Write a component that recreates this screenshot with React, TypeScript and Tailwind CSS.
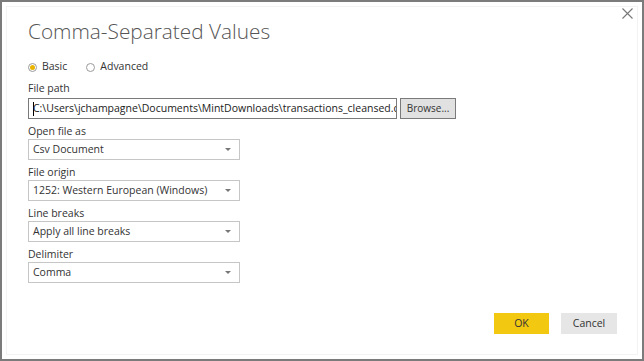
import React from "react";

const font = { fontFamily: '"Open Sans", "Noto Sans", sans-serif' };

function Radio({ label, checked }: { label: string; checked?: boolean }) {
  return (
    <label className="flex items-center gap-[5px] text-[10.5px] text-[#333]">
      <span className="w-[9px] h-[9px] rounded-full border border-[#9a9a9a] flex items-center justify-center bg-white">
        {checked && <span className="w-[5px] h-[5px] rounded-full bg-[#e8b400]" />}
      </span>
      {label}
    </label>
  );
}

function Select({ value }: { value: string }) {
  return (
    <div className="w-[212px] h-[21px] border border-[#c6c6c6] bg-white flex items-center justify-between pl-[4px] pr-[8px] text-[10.5px] text-[#333] whitespace-nowrap">
      <span>{value}</span>
      <svg width="6" height="3" viewBox="0 0 6 3">
        <path d="M0 0h6L3 3z" fill="#777" />
      </svg>
    </div>
  );
}

function Field({ label, value }: { label: string; value: string }) {
  return (
    <div className="flex flex-col">
      <div className="text-[10.5px] text-[#333] leading-[14px] h-[14px] mb-px">{label}</div>
      <Select value={value} />
    </div>
  );
}

export default function App() {
  return (
    <div className="w-[644px] h-[361px] bg-white border-2 border-[#7b7b7b] p-[4px]" style={font}>
      <div className="w-full h-full border border-[#f3f3f3] flex flex-col relative">
        <button className="absolute right-[4px] top-[1px] w-[11px] h-[11px]">
          <svg width="11" height="11" viewBox="0 0 11 11">
            <path d="M0.5 0.5L10.5 10.5M10.5 0.5L0.5 10.5" stroke="#777" strokeWidth="1.1" />
          </svg>
        </button>
        <div className="pl-[21px] pt-[11px] flex flex-col flex-1">
          <h1 className="text-[20.8px] font-light text-[#555] leading-[26px]">Comma-Separated Values</h1>
          <div className="flex gap-[19px] mt-[15px] h-[16px] items-center">
            <Radio label="Basic" checked />
            <Radio label="Advanced" />
          </div>
          <div className="text-[10.5px] text-[#333] leading-[14px] mt-[6px] mb-[3px]">File path</div>
          <div className="flex gap-[3px] items-center">
            <div className="w-[369px] h-[21px] border border-[#7a7a7a] bg-white flex items-center pl-[4px] overflow-hidden whitespace-nowrap text-[10.5px] text-[#222]">
              <span className="w-px h-[14px] bg-black -mr-px shrink-0" />
              C:\Users\jchampagne\Documents\MintDownloads\transactions_cleansed.csv
            </div>
            <button className="w-[56px] h-[21px] border border-[#7a7a7a] bg-[#e1e1e1] text-[10px] text-[#333]">
              Browse...
            </button>
          </div>
          <div className="flex flex-col gap-[5px] mt-[5px]">
            <Field label="Open file as" value="Csv Document" />
            <Field label="File origin" value="1252: Western European (Windows)" />
            <Field label="Line breaks" value="Apply all line breaks" />
            <Field label="Delimiter" value="Comma" />
          </div>
          <div className="flex justify-end gap-[12px] mt-[30px] pr-[20px]">
            <button className="w-[55px] h-[21px] bg-[#f2c811] text-[10.5px] text-[#333]">OK</button>
            <button className="w-[56px] h-[21px] bg-[#e6e6e6] text-[10.5px] text-[#333]">Cancel</button>
          </div>
        </div>
      </div>
    </div>
  );
}
